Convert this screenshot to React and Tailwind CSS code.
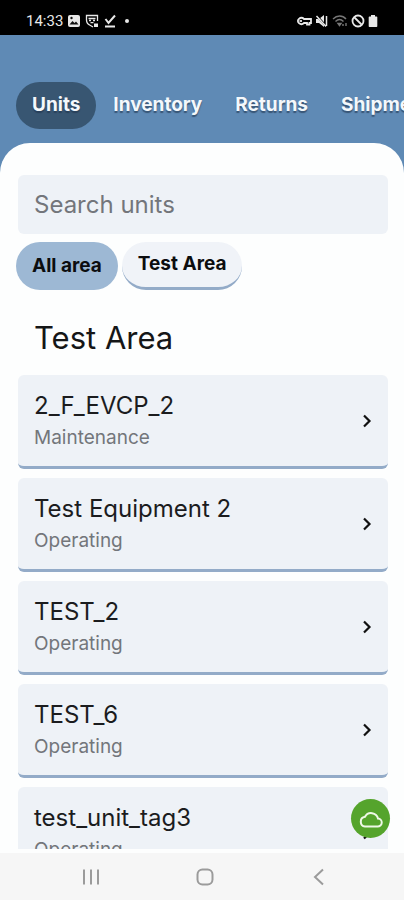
import { useState } from "react";

const tabs = ["Units", "Inventory", "Returns", "Shipments"];
const areas = ["All area", "Test Area"];

const units = [
  { name: "2_F_EVCP_2", status: "Maintenance" },
  { name: "Test Equipment 2", status: "Operating" },
  { name: "TEST_2", status: "Operating" },
  { name: "TEST_6", status: "Operating" },
  { name: "test_unit_tag3", status: "Operating" },
];

function StatusBar() {
  return (
    <div className="flex h-[35px] shrink-0 items-center justify-between bg-black px-[26px] pt-1.5 text-[#e8e8e8]">
      <div className="flex items-center gap-1">
        <span className="font-[Roboto,sans-serif] text-[15px] leading-5">14:33</span>
        <svg className="size-3.5" viewBox="0 0 14 14">
          <rect x="1" y="1" width="12" height="12" rx="2" fill="currentColor" />
          <path d="M2.5 10.5l3-3.5 2 2 1.5-1.5 2.5 3z" fill="#111" />
          <circle cx="4.5" cy="4" r="1.2" fill="#111" />
        </svg>
        <svg className="size-3.5" viewBox="0 0 14 14" fill="none" stroke="currentColor" strokeWidth="1.3">
          <path d="M8 13L5.5 11.500C3 10.500 1.500 9 1.500 6V1.500h11V7" />
          <path d="M3.500 4.500h7M4 6.500h2M8 6.500h2M5.500 8.700h3" />
          <rect x="9" y="9.500" width="4" height="3.500" fill="currentColor" stroke="none" />
        </svg>
        <svg className="size-3.5" viewBox="0 0 14 14" fill="none" stroke="currentColor" strokeWidth="2">
          <path d="M2.500 5l3 4 6.500-7.500M2 12.500h10" />
        </svg>
        <span className="ml-1 size-1 rounded-full bg-[#e8e8e8]" />
      </div>
      <div className="flex items-center gap-[3px]">
        <svg className="h-3.5 w-4" viewBox="0 0 16 14" fill="none" stroke="currentColor" strokeWidth="1.8">
          <path d="M8 5A3.500 3 0 1 0 8 9h3v1.500h2.500V9H15V5z" />
          <path d="M3.500 7h2.500" />
        </svg>
        <svg className="size-3.5" viewBox="0 0 14 14">
          <path d="M1 5h3l5-4v12L4 9H1z" fill="currentColor" />
          <path d="M1 1l11 12" stroke="#000" strokeWidth="2" />
          <path d="M1.500 2l9.500 10.500M11.500 2v10" stroke="currentColor" strokeWidth="1.5" />
        </svg>
        <svg className="h-3.5 w-4 text-[#777]" viewBox="0 0 16 14" fill="none" stroke="currentColor" strokeWidth="1.4">
          <path d="M1 5c4-4 9.500-4 13 0M3.500 7.500c2.500-2.500 5.500-2.500 8 0M6 9.500h3l-1.500 2zM11 12v-2M14 12v-3" />
        </svg>
        <svg className="size-3.5" viewBox="0 0 14 14" fill="none" stroke="currentColor" strokeWidth="1.8">
          <circle cx="7" cy="7" r="5.5" />
          <path d="M3 3l8 8" />
        </svg>
        <svg className="h-3.5 w-2.5" viewBox="0 0 10 14" fill="currentColor">
          <path d="M3 1h4v1.500h1.500a.8.8 0 0 1 .8.8v8.900a.8.8 0 0 1-.8.8h-7a.8.8 0 0 1-.8-.8V3.300a.8.8 0 0 1 .8-.8H3z" />
        </svg>
      </div>
    </div>
  );
}

function UnitCard({ unit }) {
  return (
    <li>
      <button
        type="button"
        className="flex h-[94px] w-full items-center justify-between rounded-md border-b-3 border-[#93abc8] bg-[#eef2f7] px-4 text-left"
      >
        <span className="flex flex-col pt-0.5">
          <span className="text-2xl leading-8 text-[#1b1c1e]">{unit.name}</span>
          <span className="text-[19px] leading-8 text-[#73767b]">{unit.status}</span>
        </span>
        <svg className="h-3.5 w-2.5 text-[#111]" viewBox="0 0 10 14" fill="none" stroke="currentColor" strokeWidth="2.2">
          <path d="M2 1.500L7.500 7 2 12.500" />
        </svg>
      </button>
    </li>
  );
}

function App() {
  const [tab, setTab] = useState("Units");
  const [area, setArea] = useState("All area");
  const [search, setSearch] = useState("");

  const shown = units.filter((u) => u.name.toLowerCase().includes(search.toLowerCase()));

  return (
    <div className="flex h-dvh flex-col overflow-hidden bg-[#5f8ab5] font-[Inter,sans-serif]">
      <StatusBar />

      <nav className="flex shrink-0 gap-px overflow-hidden px-4 pt-[47px] pb-3.5">
        {tabs.map((name) => (
          <button
            key={name}
            type="button"
            onClick={() => setTab(name)}
            className={`h-[47px] shrink-0 rounded-full px-4 text-[19px] font-bold text-[#f4f8fb] text-shadow-[0_2px_1px_rgb(30_50_75_/_0.6)] ${tab === name ? "bg-[#385672]" : ""}`}
          >
            {name}
          </button>
        ))}
      </nav>

      <main className="relative flex min-h-0 flex-1 flex-col rounded-t-[30px] bg-[#fdfefe] pt-8 pr-4 pb-1 pl-[18px]">
        <input
          type="text"
          aria-label="Search units"
          placeholder="Search units"
          value={search}
          onChange={(e) => setSearch(e.target.value)}
          className="h-[59px] w-full shrink-0 rounded-md bg-[#eef2f7] px-4 text-2xl text-[#1b1c1e] outline-none placeholder:text-[#73767b]"
        />

        <div className="-mx-0.5 mt-2 flex shrink-0 gap-1">
          {areas.map((name) => (
            <button
              key={name}
              type="button"
              onClick={() => setArea(name)}
              className={`h-12 rounded-full px-4 text-[19px] font-bold text-[#0c0d0f] ${area === name ? "bg-[#9db8d4]" : "border-b-3 border-[#93abc8] bg-[#f0f3f8]"}`}
            >
              {name}
            </button>
          ))}
        </div>

        <h1 className="mt-7 shrink-0 px-4 text-[31px] leading-10 text-[#151617]">Test Area</h1>

        <ul className="mt-[17px] flex min-h-0 flex-1 flex-col gap-[9px] overflow-hidden">
          {shown.map((unit) => (
            <UnitCard key={unit.name} unit={unit} />
          ))}
        </ul>

        <button
          type="button"
          aria-label="Sync"
          className="absolute right-3.5 bottom-[15px] flex size-[39px] items-center justify-center rounded-full bg-[#55a42c]"
        >
          <svg className="h-[18px] w-6" viewBox="0 0 24 18" fill="none" stroke="#eef8e6" strokeWidth="2">
            <path d="M6 16.500h12.500a4 4 0 0 0 .5-8A7 7 0 0 0 6 6.800a4.900 4.900 0 0 0 0 9.700z" />
          </svg>
        </button>
      </main>

      <footer className="flex h-[47px] shrink-0 items-center justify-around bg-[#f6f6f6] pr-7 pl-[34px] text-[#9b9b9b]">
        <button type="button" aria-label="Recent apps">
          <svg className="size-[18px]" viewBox="0 0 18 18" stroke="currentColor" strokeWidth="2">
            <path d="M2 1.500v15M9 1.500v15M16 1.500v15" />
          </svg>
        </button>
        <button type="button" aria-label="Home">
          <svg className="size-[18px]" viewBox="0 0 18 18" fill="none" stroke="currentColor" strokeWidth="2">
            <rect x="1.500" y="1.500" width="15" height="15" rx="5" />
          </svg>
        </button>
        <button type="button" aria-label="Back">
          <svg className="size-[18px]" viewBox="0 0 18 18" fill="none" stroke="currentColor" strokeWidth="2">
            <path d="M13 1.500L5 9l8 7.500" />
          </svg>
        </button>
      </footer>
    </div>
  );
}

export default App;
